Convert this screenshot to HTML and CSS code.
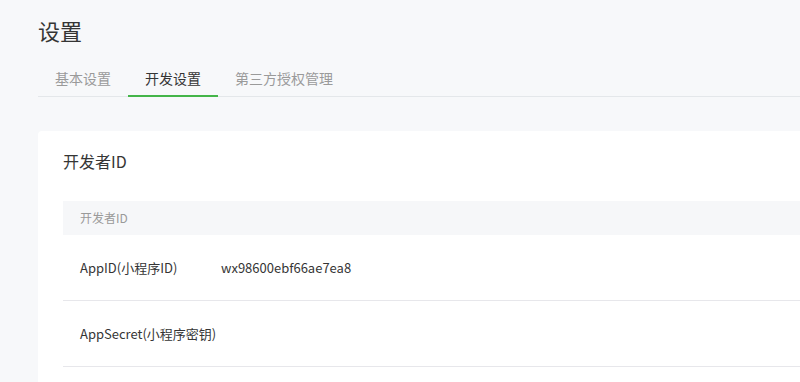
FILE: index.html
```html
<!DOCTYPE html>
<html lang="zh-CN">
<head>
<meta charset="utf-8">
<title>设置</title>
<link rel="stylesheet" href="styles.css">
</head>
<body>
<div class="page">
  <h1 class="page-title">设置</h1>
  <nav class="tabs">
    <a class="tab">基本设置</a>
    <a class="tab tab-active">开发设置</a>
    <a class="tab">第三方授权管理</a>
  </nav>
  <section class="card">
    <h2 class="card-title">开发者ID</h2>
    <div class="table">
      <div class="table-head">开发者ID</div>
      <div class="table-row">
        <span class="cell-label">AppID(小程序ID)</span>
        <span class="cell-value">wx98600ebf66ae7ea8</span>
      </div>
      <div class="table-row">
        <span class="cell-label">AppSecret(小程序密钥)</span>
        <span class="cell-value"></span>
      </div>
    </div>
  </section>
</div>
</body>
</html>
```

FILE: styles.css
```css
html, body {
  margin: 0;
  padding: 0;
  background: #f7f8fa;
  overflow: hidden;
}
body {
  font-family: "Noto Sans CJK SC", "Noto Sans", sans-serif;
  color: #353535;
}
.page {
  width: 1100px;
  padding-left: 38px;
}
.page-title {
  margin: 18px 0 0 0;
  font-size: 22px;
  line-height: 24px;
  font-weight: normal;
  color: #353535;
}
.tabs {
  display: flex;
  margin-top: 18px;
  height: 36px;
  border-bottom: 1px solid #e4e7ea;
}
.tab {
  position: relative;
  padding: 0 17px;
  line-height: 36px;
  font-size: 14px;
  color: #9a9a9a;
}
.tab-active {
  color: #353535;
}
.tab-active::after {
  content: "";
  position: absolute;
  left: 0;
  right: 0;
  bottom: -1px;
  height: 2px;
  background: #44b549;
}
.card {
  margin-top: 34px;
  background: #fff;
  border-radius: 4px;
  padding: 18px 0 0 25px;
  height: 300px;
}
.card-title {
  margin: 0;
  font-size: 16px;
  line-height: 24px;
  font-weight: normal;
  color: #353535;
}
.table {
  margin-top: 28px;
}
.table-head {
  height: 34px;
  line-height: 34px;
  padding-left: 17px;
  background: #f6f7f9;
  font-size: 12px;
  color: #9a9a9a;
}
.table-row {
  display: flex;
  align-items: center;
  height: 65px;
  border-bottom: 1px solid #e7e7eb;
  padding-left: 17px;
  font-size: 13px;
  color: #353535;
}
.cell-label {
  width: 141px;
}
```
